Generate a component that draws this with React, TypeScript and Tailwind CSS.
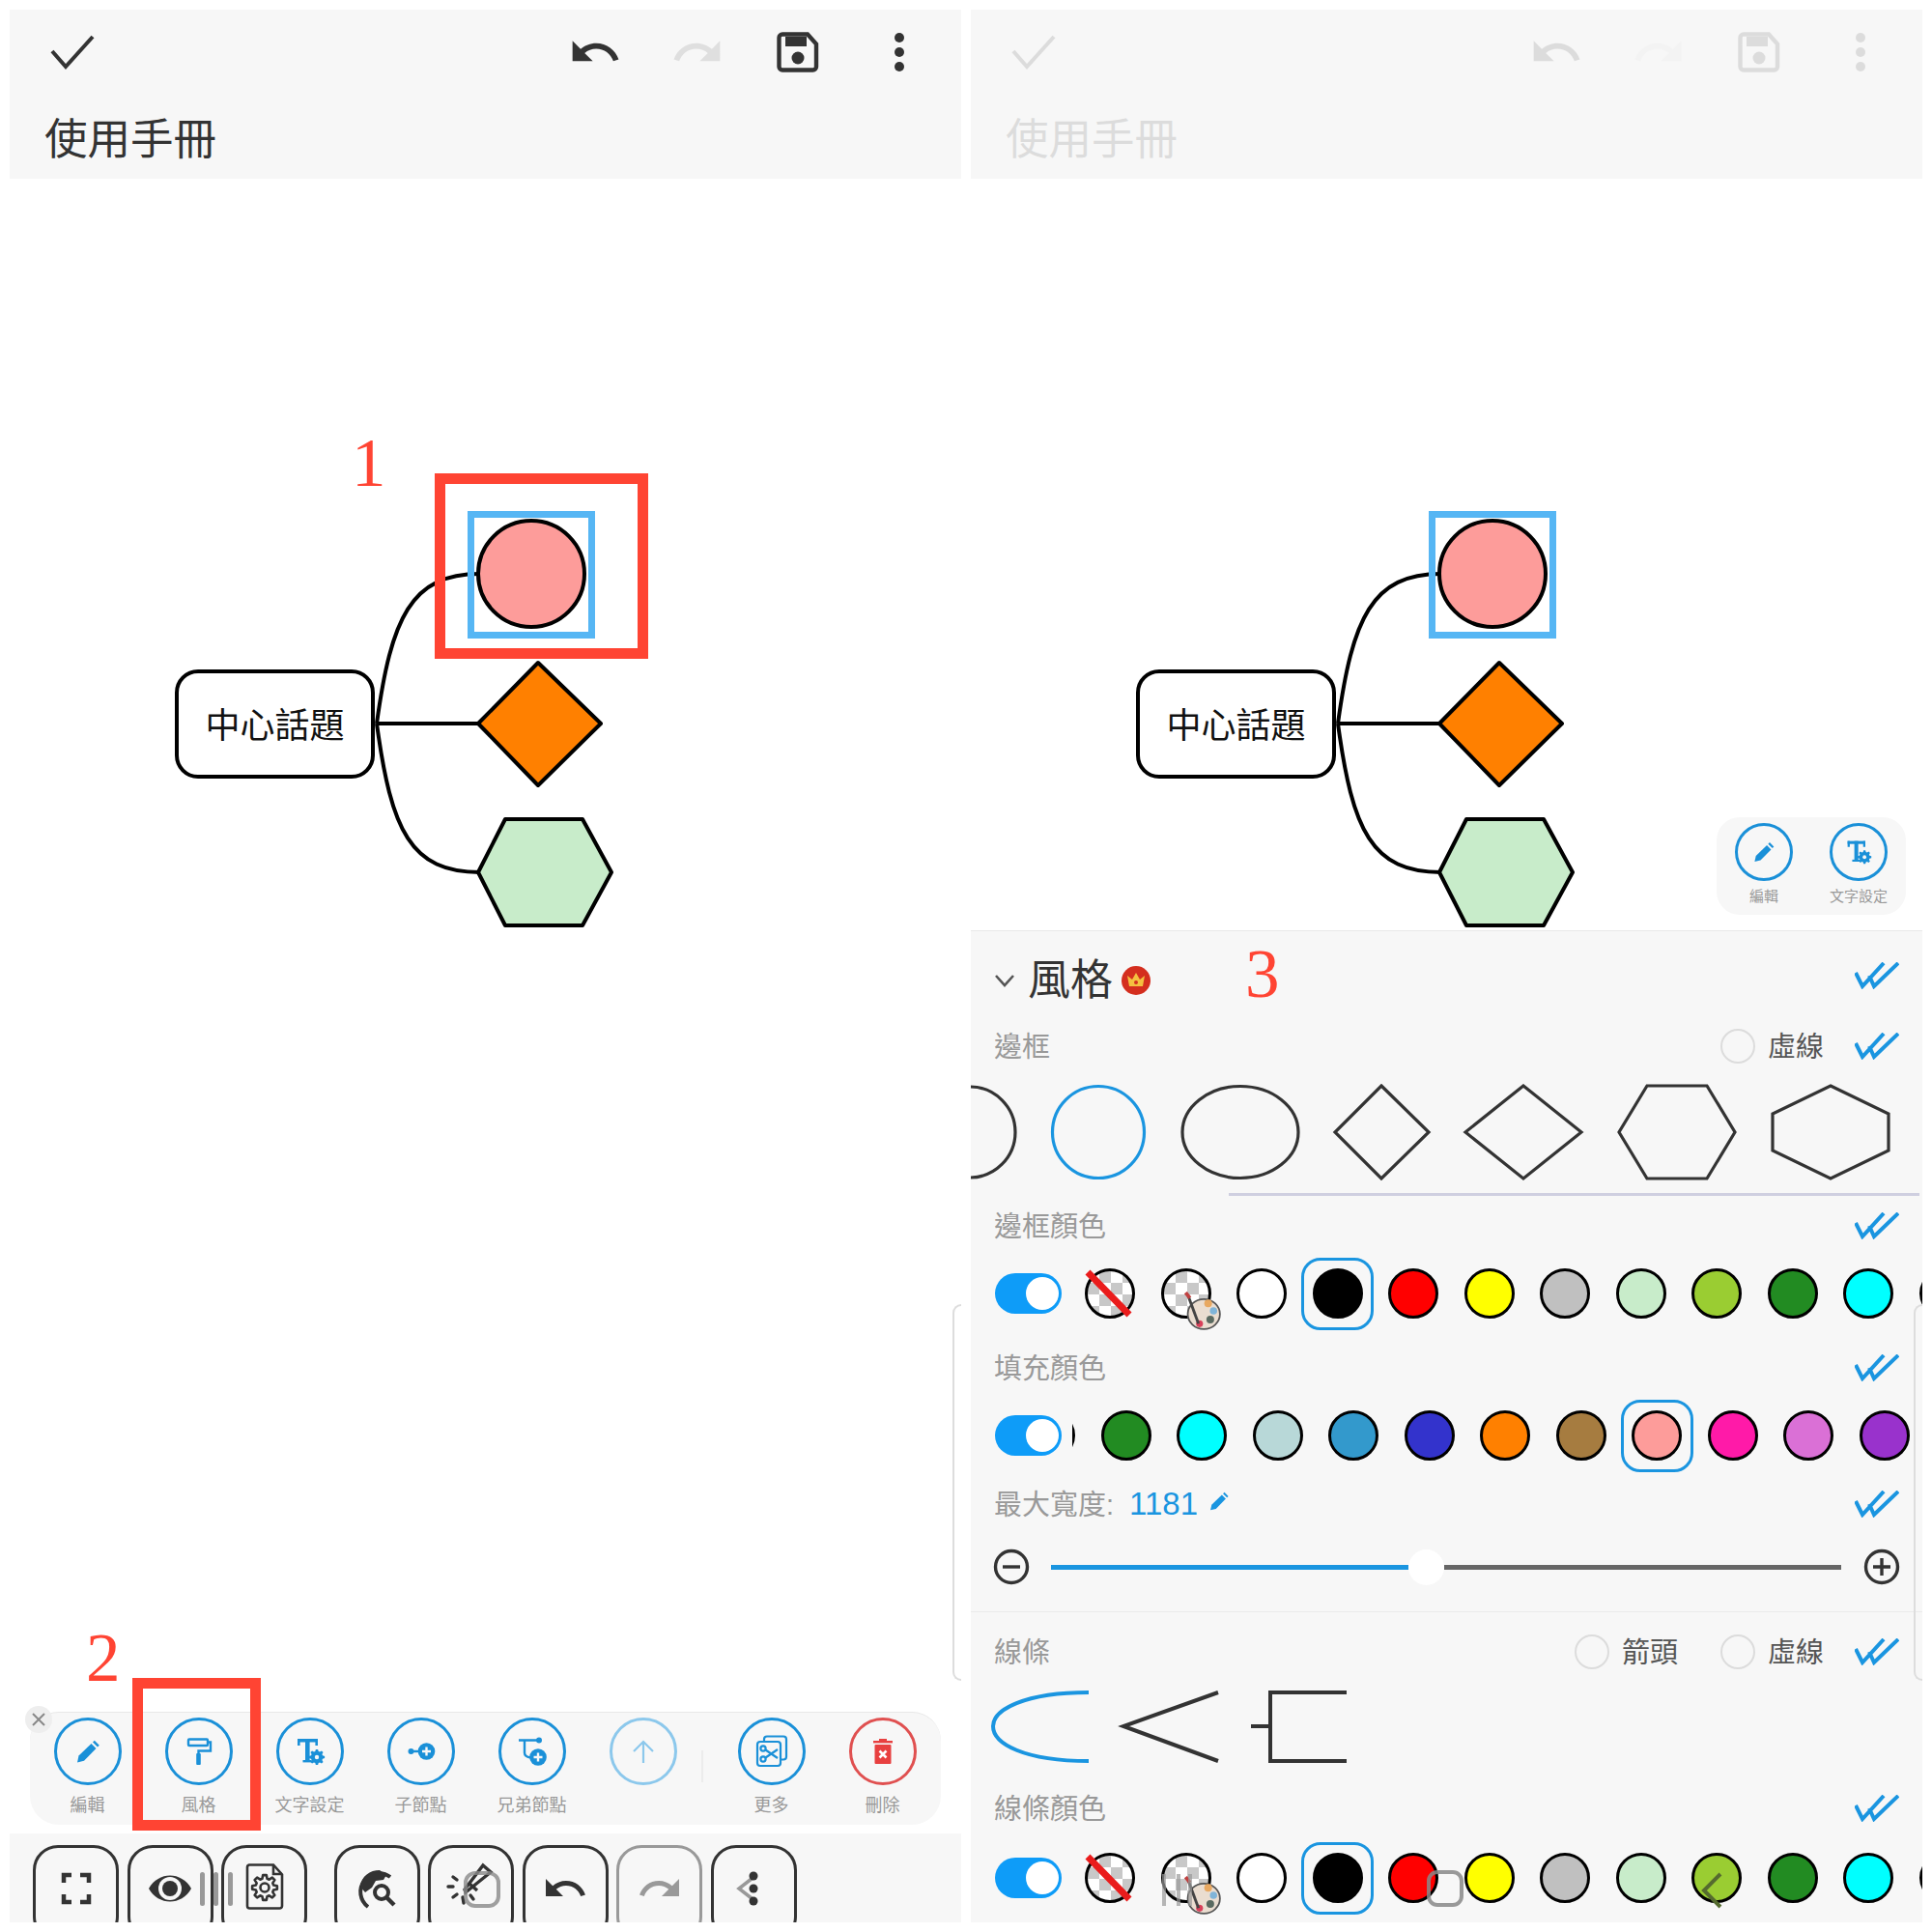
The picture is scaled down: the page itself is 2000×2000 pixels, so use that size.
import React from "react";

const gearPath = (cx: number, cy: number, r: number, R: number, teeth: number) => {
  const pts: string[] = [];
  for (let i = 0; i < teeth; i++) {
    const a = (i / teeth) * Math.PI * 2;
    const w = Math.PI / teeth / 2;
    const p = [
      [r, a - w * 1.4],
      [R, a - w * 0.7],
      [R, a + w * 0.7],
      [r, a + w * 1.4],
    ];
    p.forEach(([rad, ang]) => pts.push(`${(cx + rad * Math.cos(ang)).toFixed(2)} ${(cy + rad * Math.sin(ang)).toFixed(2)}`));
  }
  return "M" + pts.join("L") + "Z";
};

const UNDO = "M12.5 8c-2.65 0-5.05.99-6.9 2.6L2 7v9h9l-3.62-3.62c1.39-1.16 3.16-1.88 5.12-1.88 3.54 0 6.55 2.31 7.6 5.5l2.37-.78C21.08 11.03 17.15 8 12.5 8z";

type IconProps = { s?: number };

const Pencil = ({ s = 32 }: IconProps) => (
  <svg width={s} height={s} viewBox="0 0 32 32" fill="currentColor">
    <path d="M5 27.5l1.5-7L19.5 8l5 5L12 25.8z" />
    <path d="M21 6.5l1.8-1.8 5 5-1.8 1.8z" />
  </svg>
);
const Roller = ({ s = 32 }: IconProps) => (
  <svg width={s} height={s} viewBox="0 0 32 32" fill="none" stroke="currentColor">
    <rect x="5" y="3.5" width="20" height="6.5" rx="1" strokeWidth="2.4" />
    <path d="M25 6.5h3v9H15.5v4" strokeWidth="2.4" />
    <rect x="13.2" y="18" width="4.6" height="12" rx="1" fill="currentColor" stroke="none" />
  </svg>
);
const TextGear = ({ s = 32 }: IconProps) => (
  <svg width={s} height={s} viewBox="0 0 32 32" fill="currentColor">
    <rect x="3" y="3" width="21" height="3.5" />
    <rect x="3" y="3" width="2.6" height="7" />
    <rect x="21.4" y="3" width="2.6" height="7" />
    <rect x="11" y="3" width="4.6" height="24" />
    <rect x="8.5" y="25" width="9" height="2.4" />
    <path d={gearPath(23, 22, 6.2, 8.2, 8)} />
    <circle cx="23" cy="22" r="2.2" fill="#f7f7f7" />
  </svg>
);
const ChildNode = ({ s = 32 }: IconProps) => (
  <svg width={s} height={s} viewBox="0 0 32 32" fill="currentColor">
    <circle cx="5.5" cy="16" r="3" />
    <rect x="5" y="14.8" width="14" height="2.4" />
    <circle cx="21.5" cy="16" r="8.8" />
    <path d="M21.5 11.5v9M17 16h9" stroke="#f7f7f7" strokeWidth="2.4" />
  </svg>
);
const SiblingNode = ({ s = 32 }: IconProps) => (
  <svg width={s} height={s} viewBox="0 0 32 32" fill="currentColor">
    <circle cx="23" cy="4.5" r="3" />
    <path d="M2 4.5h21M8 4.5v13q0 4 6 5" fill="none" stroke="currentColor" strokeWidth="2.4" />
    <circle cx="22" cy="22" r="8.8" />
    <path d="M22 17.5v9M17.5 22h9" stroke="#f7f7f7" strokeWidth="2.4" />
  </svg>
);
const UpArrow = ({ s = 32 }: IconProps) => (
  <svg width={s} height={s} viewBox="0 0 32 32" fill="none" stroke="currentColor" strokeWidth="2.2">
    <path d="M16 28V6M6 16L16 6l10 10" />
  </svg>
);
const MoreIcon = ({ s = 34 }: IconProps) => (
  <svg width={s} height={s} viewBox="0 0 34 34" fill="none" stroke="currentColor" strokeWidth="2.2">
    <rect x="9" y="1.5" width="23" height="24" rx="3" />
    <rect x="2" y="7" width="24" height="25" rx="3" fill="#f7f7f7" />
    <circle cx="8" cy="14" r="2.6" />
    <circle cx="8" cy="25" r="2.6" />
    <path d="M10.5 15.5L23 24M10.5 23.5L23 15" />
  </svg>
);
const TrashIcon = ({ s = 32 }: IconProps) => (
  <svg width={s} height={s} viewBox="0 0 32 32" fill="currentColor">
    <rect x="6" y="5" width="20" height="2.4" />
    <rect x="12" y="3" width="8" height="2.4" />
    <rect x="7.5" y="9" width="17" height="20" rx="1" />
    <path d="M12.5 15.5l7 7M19.5 15.5l-7 7" stroke="#fff" strokeWidth="2.6" />
  </svg>
);

const Doubled = () => (
  <svg width="46" height="28" viewBox="0 0 46 28" fill="none" stroke="#1a95e0" strokeWidth="4" className="shrink-0">
    <path d="M1 11l7 14L30 1M15 14l5 11L45 1" />
  </svg>
);

const Radio = ({ label }: { label: string }) => (
  <div className="flex items-center gap-[13px]">
    <div className="w-[36px] h-[36px] rounded-full border-2 border-[#dcdcdc]" />
    <span className="text-[29px] leading-[36px] pt-[2px] text-[#555]">{label}</span>
  </div>
);

const Label = ({ children }: { children: React.ReactNode }) => (
  <span className="text-[29px] leading-[36px] pt-[2px] text-[#999]">{children}</span>
);

const Toggle = () => (
  <div className="w-[69px] h-[42px] rounded-full bg-[#0e9cf8] flex items-center justify-end pr-[3px] shrink-0">
    <div className="w-[34px] h-[34px] rounded-full bg-white" />
  </div>
);

const Swatch = ({ c, selected }: { c: string; selected?: boolean }) => (
  <div className={`relative w-[52px] h-[52px] shrink-0 rounded-full border-[3px] border-black ${c}`}>
    {selected && <div className="absolute -left-[14.5px] -top-[14.5px] w-[75px] h-[75px] rounded-[20px] border-[3px] border-[#1a95e0]" />}
  </div>
);

const checker = "bg-[repeating-conic-gradient(#c8c8c8_0%_25%,#ffffff_0%_50%)] bg-[length:24px_24px]";

const NoneSwatch = () => (
  <div className={`relative w-[52px] h-[52px] shrink-0 rounded-full border-[3px] border-black ${checker}`}>
    <svg className="absolute -left-[6px] -top-[6px]" width="58" height="58" viewBox="0 0 58 58">
      <path d="M6 7L49 51" stroke="#ea1c1c" strokeWidth="7" />
    </svg>
  </div>
);

const PaletteSwatch = () => (
  <div className={`relative w-[52px] h-[52px] shrink-0 rounded-full border-[3px] border-black ${checker}`}>
    <svg className="absolute left-[19px] top-[21px]" width="40" height="40" viewBox="0 0 36 36">
      <ellipse cx="20" cy="21" rx="15" ry="14" fill="#eaddd0" stroke="#555" strokeWidth="1.6" />
      <circle cx="24" cy="11" r="3.6" fill="#e8a860" />
      <circle cx="29" cy="18" r="3.4" fill="#7fb4d8" />
      <circle cx="26" cy="26" r="3.6" fill="#5a6a60" />
      <circle cx="16" cy="30" r="3.2" fill="#d8405a" />
      <path d="M5 3L15 30" stroke="#444" strokeWidth="2.6" />
      <path d="M3 1l4 5" stroke="#c04040" strokeWidth="3.4" />
    </svg>
  </div>
);

const ColorRow = ({ children, offset = "ml-[24px]" }: { children: React.ReactNode; offset?: string }) => (
  <div className="h-[76px] flex items-center pl-[25px]">
    <Toggle />
    <div className={`flex-1 h-full overflow-hidden flex items-center gap-[26.5px] ${offset}`}>{children}</div>
  </div>
);

const Header = ({ faded }: { faded?: boolean }) => (
  <div className="h-[175px] shrink-0 bg-[#f7f7f7]">
    <div className={faded ? "opacity-[0.13]" : ""}>
      <div className="h-[88px] flex items-center pl-[42px] pr-[58px] text-[#333]">
        <svg width="46" height="36" viewBox="0 0 46 36" fill="none" stroke="currentColor" strokeWidth="4">
          <path d="M2 17l14 16L44 2" />
        </svg>
        <div className="flex-1" />
        <svg width="56" height="56" viewBox="0 0 24 24" fill="currentColor"><path d={UNDO} /></svg>
        <svg width="56" height="56" viewBox="0 0 24 24" fill="#dfdfdf" className="ml-[50px] -scale-x-100"><path d={UNDO} /></svg>
        <svg width="44" height="42" viewBox="0 0 44 42" className="ml-[54px]" fill="none">
          <path d="M6 2.5h26l9 10V36a3.5 3.5 0 0 1-3.5 3.5H6A3.5 3.5 0 0 1 2.5 36V6A3.5 3.5 0 0 1 6 2.5z" stroke="currentColor" strokeWidth="4.4" />
          <rect x="9" y="5" width="22" height="10" fill="currentColor" />
          <circle cx="22" cy="27" r="6.5" fill="currentColor" />
        </svg>
        <svg width="12" height="42" viewBox="0 0 12 42" fill="currentColor" className="ml-[77px]">
          <circle cx="6" cy="6" r="5" />
          <circle cx="6" cy="21" r="5" />
          <circle cx="6" cy="36" r="5" />
        </svg>
      </div>
      <div className="mt-[17px] pl-[36px] text-[44.5px] leading-[60px] text-[#333]">使用手冊</div>
    </div>
  </div>
);

const Diagram = () => (
  <>
    <svg className="absolute left-0 top-0" width="985" height="800" viewBox="10 185 985 800" fill="none">
      <path d="M390 749C405 640 425 594 497 594" stroke="#000" strokeWidth="4" />
      <path d="M390 749H497" stroke="#000" strokeWidth="4" />
      <path d="M390 749C405 860 425 903 497 903" stroke="#000" strokeWidth="4" />
      <rect x="487.5" y="532.5" width="125" height="125" stroke="#56b6f4" strokeWidth="7" />
      <circle cx="550" cy="594" r="55" fill="#fd9c9a" stroke="#000" strokeWidth="4" />
      <path d="M495 749L557 686L622 749L557 813Z" fill="#ff8000" stroke="#000" strokeWidth="4" strokeLinejoin="round" />
      <path d="M495 903L523 848H603L633 903L603 958H523Z" fill="#c8ecca" stroke="#000" strokeWidth="4" strokeLinejoin="round" />
    </svg>
    <div className="absolute left-[171px] top-[508px] w-[207px] h-[113px] rounded-[24px] border-[4px] border-black bg-white flex items-center justify-center pt-[5px] text-[36px] leading-none text-[#111]">
      中心話題
    </div>
  </>
);

const RedNum = ({ n, cls }: { n: string; cls: string }) => (
  <div className={`absolute text-[71px] leading-none text-[#ff4433] font-['Liberation_Serif',serif] z-10 ${cls}`}>{n}</div>
);

const ToolItem = ({ label, icon, tone = "blue" }: { label: string; icon: React.ReactNode; tone?: "blue" | "faded" | "red" }) => (
  <div className="w-[115px] shrink-0 flex flex-col items-center">
    <div
      className={`w-[70px] h-[70px] rounded-full border-[3px] flex items-center justify-center ${
        tone === "blue"
          ? "border-[#1a90d8] text-[#1a90d8]"
          : tone === "red"
            ? "border-[#e05050] text-[#e84040]"
            : "border-[#8cc8ec] text-[#8cc8ec]"
      }`}
    >
      {icon}
    </div>
    <div className="mt-[9px] h-[24px] text-[18px] leading-[24px] text-[#999] whitespace-nowrap">{label}</div>
  </div>
);

const Toolbar = () => (
  <div className="relative h-[117px] mx-[21px] shrink-0 rounded-[30px] bg-[#f7f7f7] border-t border-[#e8e8e8] pt-[5px] pl-[2px] flex items-start">
    <div className="absolute -left-[5px] -top-[7px] w-[28px] h-[28px] rounded-full bg-[#eeeeee] flex items-center justify-center">
      <svg width="16" height="16" viewBox="0 0 16 16" stroke="#888" strokeWidth="2">
        <path d="M2 2l12 12M14 2L2 14" />
      </svg>
    </div>
    <ToolItem label="編輯" icon={<Pencil />} />
    <ToolItem label="風格" icon={<Roller />} />
    <ToolItem label="文字設定" icon={<TextGear />} />
    <ToolItem label="子節點" icon={<ChildNode />} />
    <ToolItem label="兄弟節點" icon={<SiblingNode />} />
    <ToolItem label="" tone="faded" icon={<UpArrow />} />
    <div className="w-[2px] h-[33px] mt-[34px] ml-[3px] mr-[13px] bg-[#ececec] shrink-0" />
    <ToolItem label="更多" icon={<MoreIcon />} />
    <ToolItem label="刪除" tone="red" icon={<TrashIcon />} />
  </div>
);

const NavBtn = ({ children, cls = "", gray }: { children: React.ReactNode; cls?: string; gray?: boolean }) => (
  <div className={`w-[89px] h-[100px] shrink-0 rounded-[26px] border-[3px] flex justify-center pt-[18px] ${gray ? "border-[#999]" : "border-[#333]"} ${cls}`}>
    {children}
  </div>
);

const BottomBar = () => (
  <div className="relative h-[92px] mt-[9px] shrink-0 bg-[#f7f7f7] overflow-hidden flex items-start gap-[8.5px] pt-[12px] pl-[24px]">
    <NavBtn>
      <svg width="48" height="48" viewBox="0 0 48 48" fill="none" stroke="#333" strokeWidth="4.5">
        <path d="M11 18v-8h8M28 10h9v8M37 30v8h-9M19 38h-8v-8" />
      </svg>
    </NavBtn>
    <NavBtn>
      <svg width="48" height="48" viewBox="0 0 48 48">
        <path d="M2 24C12 6 36 6 46 24C36 42 12 42 2 24Z" fill="#333" />
        <circle cx="24" cy="24" r="12" fill="#f7f7f7" />
        <circle cx="24" cy="24" r="8" fill="#333" />
      </svg>
    </NavBtn>
    <NavBtn>
      <svg width="48" height="50" viewBox="0 0 48 50" fill="none" stroke="#333" strokeWidth="2.6" className="-mt-[3px]">
        <path d="M8 2.5h25l9 10V45a2.5 2.5 0 0 1-2.5 2.5H8.500A2.500 2.500 0 0 1 6 45V5a2.500 2.500 0 0 1 2-2.500z" />
        <path d="M33 3v9h9" />
        <path d={gearPath(24, 26, 9.5, 13, 8)} strokeLinejoin="round" />
        <circle cx="24" cy="26" r="4.500" />
      </svg>
    </NavBtn>
    <NavBtn cls="ml-[19px]">
      <svg width="48" height="48" viewBox="0 0 48 48" fill="none" stroke="#333">
        <path d="M15 43A18 18 0 1 1 38 12" strokeWidth="4" />
        <path d="M7 22C8 11 17 5 27 5l7 5-3 5-8 1-4 7-7 5z" fill="#333" stroke="none" />
        <circle cx="29" cy="28" r="7" strokeWidth="4" />
        <path d="M34 33l8 8" strokeWidth="4.500" />
      </svg>
    </NavBtn>
    <NavBtn>
      <svg width="52" height="52" viewBox="0 0 52 52" fill="none" stroke="#333" strokeWidth="3.400" className="-mt-[5px] -ml-[2px]">
        <path d="M20 30L39 5l8 7-26 21z" />
        <path d="M25 24l8 7" />
        <path d="M3 27h5M8 17l4 3M8 38l4-3M18 38l1 6M26 36l3 4" strokeWidth="3.400" strokeLinecap="round" />
      </svg>
    </NavBtn>
    <NavBtn>
      <svg width="48" height="48" viewBox="0 0 24 24" fill="#333"><path d={UNDO} /></svg>
    </NavBtn>
    <NavBtn gray>
      <svg width="48" height="48" viewBox="0 0 24 24" fill="#999" className="-scale-x-100"><path d={UNDO} /></svg>
    </NavBtn>
    <NavBtn>
      <svg width="48" height="48" viewBox="0 0 48 48" fill="none">
        <path d="M27 10L9 24l18 14" stroke="#999" strokeWidth="3.500" />
        <circle cx="24" cy="11" r="4.500" fill="#333" />
        <circle cx="24" cy="24" r="4.500" fill="#333" />
        <circle cx="24" cy="37" r="4.500" fill="#333" />
      </svg>
    </NavBtn>
    <div className="absolute left-[197px] top-[40px] w-[5px] h-[35px] rounded bg-[#999]" />
    <div className="absolute left-[211px] top-[40px] w-[5px] h-[35px] rounded bg-[#999]" />
    <div className="absolute left-[226px] top-[40px] w-[5px] h-[35px] rounded bg-[#999]" />
    <div className="absolute left-[470px] top-[39px] w-[38px] h-[38px] rounded-[12px] border-[4px] border-[#888] opacity-80" />
  </div>
);

const LeftPanel = () => (
  <div className="relative w-[985px] h-[1980px] shrink-0 flex flex-col overflow-hidden">
    <Header />
    <div className="relative flex-1">
      <Diagram />
      <div className="absolute left-[440px] top-[305px] w-[221px] h-[192px] border-[11px] border-[#ff4433]" />
      <RedNum n="1" cls="left-[354px] top-[259px]" />
    </div>
    <Toolbar />
    <BottomBar />
    <div className="absolute left-[127px] top-[1727px] w-[133px] h-[158px] border-[11px] border-[#ff4433] z-10" />
    <RedNum n="2" cls="left-[79px] top-[1671px]" />
    <div className="absolute right-0 top-[1340px] w-[9px] h-[390px] border-2 border-r-0 border-[#dddddd] rounded-l-[14px]" />
  </div>
);

const RightPanel = () => (
  <div className="relative w-[985px] h-[1980px] shrink-0 flex flex-col overflow-hidden">
    <Header faded />
    <div className="relative h-[778px] shrink-0">
      <Diagram />
      <div className="absolute left-[772px] top-[661px] w-[196px] h-[101px] rounded-[24px] bg-[#f7f7f7] flex">
        {[
          ["編輯", <Pencil key="p" s={28} />],
          ["文字設定", <TextGear key="t" s={28} />],
        ].map(([label, icon], i) => (
          <div key={i} className="w-[98px] flex flex-col items-center pt-[6px]">
            <div className="w-[60px] h-[60px] rounded-full border-[3px] border-[#1a90d8] text-[#1a90d8] flex items-center justify-center">{icon}</div>
            <div className="mt-[6px] text-[15px] leading-[20px] text-[#999] whitespace-nowrap">{label}</div>
          </div>
        ))}
      </div>
    </div>
    <div className="flex-1 bg-[#f7f7f7] border-t border-[#e8e8e8] overflow-hidden">
      <div className="h-[101px] flex items-center pl-[24px] pr-[24px]">
        <svg width="22" height="14" viewBox="0 0 22 14" fill="none" stroke="#555" strokeWidth="2.6">
          <path d="M2 2l9 10 9-10" />
        </svg>
        <span className="ml-[13px] text-[44px] leading-none text-[#333]">風格</span>
        <svg width="32" height="32" viewBox="0 0 32 32" className="ml-[8px]">
          <circle cx="16" cy="16" r="15" fill="#d42e1e" />
          <path d="M7 11l5 4 4-7 4 7 5-4-2 11H9z" fill="#f4c040" />
          <circle cx="16" cy="18" r="2" fill="#d42e1e" />
        </svg>
        <div className="flex-1" />
        <div className="-mt-[9px]"><Doubled /></div>
      </div>
      <div className="h-[36px] flex items-center pl-[24px] pr-[24px]">
        <Label>邊框</Label>
        <div className="flex-1" />
        <Radio label="虛線" />
        <div className="ml-[32px]"><Doubled /></div>
      </div>
      <svg className="mt-[21px] block" width="985" height="101" viewBox="1005 1122 985 101" fill="none" stroke="#333" strokeWidth="3.200">
        <circle cx="1004" cy="1172" r="47" />
        <circle cx="1137" cy="1172" r="47.500" stroke="#1a95e0" />
        <ellipse cx="1284" cy="1172" rx="60" ry="47.500" />
        <path d="M1430 1124L1479 1172L1430 1220L1382 1172Z" />
        <path d="M1577 1124L1637 1172L1577 1220L1517 1172Z" />
        <path d="M1705 1124H1767L1796 1172L1767 1220H1705L1676 1172Z" />
        <path d="M1895 1124L1955 1153V1191L1895 1220L1835 1191V1153Z" />
      </svg>
      <div className="mt-[12px] ml-[267px] w-[715px] h-[3px] bg-[#cfcfe0]" />
      <div className="mt-[13px] h-[36px] flex items-center justify-between pl-[24px] pr-[24px]">
        <Label>邊框顏色</Label>
        <Doubled />
      </div>
      <div className="mt-[14px]">
        <ColorRow>
          <NoneSwatch />
          <PaletteSwatch />
          <Swatch c="bg-white" />
          <Swatch c="bg-black" selected />
          <Swatch c="bg-[#ff0000]" />
          <Swatch c="bg-[#ffff00]" />
          <Swatch c="bg-[#c0c0c0]" />
          <Swatch c="bg-[#c8ecca]" />
          <Swatch c="bg-[#9acd32]" />
          <Swatch c="bg-[#228b22]" />
          <Swatch c="bg-[#00ffff]" />
          <Swatch c="bg-[#00ffff]" />
        </ColorRow>
      </div>
      <div className="mt-[21px] h-[36px] flex items-center justify-between pl-[24px] pr-[24px]">
        <Label>填充顏色</Label>
        <Doubled />
      </div>
      <div className="mt-[14px]">
        <ColorRow offset="ml-[11px]">
          <div className="-ml-[49px] flex items-center gap-[26.5px]">
            <Swatch c="bg-[#9acd32]" />
            <Swatch c="bg-[#228b22]" />
            <Swatch c="bg-[#00ffff]" />
            <Swatch c="bg-[#b8d8d8]" />
            <Swatch c="bg-[#3399cc]" />
            <Swatch c="bg-[#3333cc]" />
            <Swatch c="bg-[#ff8000]" />
            <Swatch c="bg-[#a67c40]" />
            <Swatch c="bg-[#fd9c9a]" selected />
            <Swatch c="bg-[#ff1aa8]" />
            <Swatch c="bg-[#da70d6]" />
            <Swatch c="bg-[#9932cc]" />
          </div>
        </ColorRow>
      </div>
      <div className="mt-[15px] h-[36px] flex items-center pl-[24px] pr-[24px]">
        <Label>最大寬度:</Label>
        <span className="ml-[16px] text-[33px] leading-[36px] text-[#1a95e0]">1181</span>
        <svg width="26" height="26" viewBox="0 0 32 32" fill="#1a95e0" className="ml-[9px] -mt-[6px]">
          <path d="M5 27.5l1.5-7L19.500 8l5 5L12 25.800z" />
          <path d="M21 6.500l1.800-1.800 5 5-1.800 1.800z" />
        </svg>
        <div className="flex-1" />
        <Doubled />
      </div>
      <div className="mt-[25px] h-[44px] flex items-center pl-[23px]">
        <svg width="38" height="38" viewBox="0 0 38 38" fill="none" stroke="#333" strokeWidth="3.400" className="shrink-0">
          <circle cx="19" cy="19" r="16.500" />
          <path d="M10 19h18" />
        </svg>
        <div className="ml-[22px] w-[370px] h-[5px] bg-[#1a95e0]" />
        <div className="w-[37px] h-[37px] rounded-full bg-white shrink-0" />
        <div className="w-[411px] h-[5px] bg-[#666]" />
        <svg width="38" height="38" viewBox="0 0 38 38" fill="none" stroke="#333" strokeWidth="3.400" className="ml-[23px] shrink-0">
          <circle cx="19" cy="19" r="16.500" />
          <path d="M10 19h18M19 10v18" />
        </svg>
      </div>
      <div className="mt-[24px] h-px bg-[#ebebeb]" />
      <div className="mt-[23px] h-[36px] flex items-center pl-[24px] pr-[24px]">
        <Label>線條</Label>
        <div className="flex-1" />
        <Radio label="箭頭" />
        <div className="ml-[44px]"><Radio label="虛線" /></div>
        <div className="ml-[32px]"><Doubled /></div>
      </div>
      <svg className="mt-[20px] block" width="985" height="79" viewBox="1005 1748 985 79" fill="none" stroke="#333" strokeWidth="4">
        <path d="M1127 1752C1060 1752 1028 1770 1028 1787C1028 1805 1060 1823 1127 1823" stroke="#1a95e0" />
        <path d="M1261 1752L1163 1787L1261 1823" />
        <path d="M1394 1752H1315V1823H1394M1295 1787H1315" />
      </svg>
      <div className="mt-[27px] h-[36px] flex items-center justify-between pl-[24px] pr-[24px]">
        <Label>線條顏色</Label>
        <Doubled />
      </div>
      <div className="mt-[16px]">
        <ColorRow>
          <NoneSwatch />
          <PaletteSwatch />
          <Swatch c="bg-white" />
          <Swatch c="bg-black" selected />
          <Swatch c="bg-[#ff0000]" />
          <Swatch c="bg-[#ffff00]" />
          <Swatch c="bg-[#c0c0c0]" />
          <Swatch c="bg-[#c8ecca]" />
          <Swatch c="bg-[#9acd32]" />
          <Swatch c="bg-[#228b22]" />
          <Swatch c="bg-[#00ffff]" />
          <Swatch c="bg-[#00ffff]" />
        </ColorRow>
      </div>
    </div>
    <RedNum n="3" cls="left-[284px] top-[963px]" />
    <div className="absolute right-0 top-[1340px] w-[9px] h-[390px] border-2 border-r-0 border-[#dddddd] rounded-l-[14px]" />
    <div className="absolute left-[198px] top-[1930px] w-[4px] h-[33px] bg-[#999] opacity-70" />
    <div className="absolute left-[213px] top-[1930px] w-[4px] h-[33px] bg-[#999] opacity-70" />
    <div className="absolute left-[225px] top-[1930px] w-[4px] h-[33px] bg-[#999] opacity-70" />
    <div className="absolute left-[472px] top-[1926px] w-[38px] h-[38px] rounded-[11px] border-[4px] border-[#888] opacity-85" />
    <svg className="absolute left-[755px] top-[1928px]" width="24" height="38" viewBox="0 0 24 38" fill="none" stroke="#556b2f" strokeWidth="4">
      <path d="M21 2L4 19l17 17" />
    </svg>
  </div>
);

export default function App() {
  return (
    <div className="w-[2000px] h-[2000px] bg-white flex gap-[10px] p-[10px] overflow-hidden font-['Liberation_Sans','Noto_Sans_CJK_TC',sans-serif]">
      <LeftPanel />
      <RightPanel />
    </div>
  );
}
